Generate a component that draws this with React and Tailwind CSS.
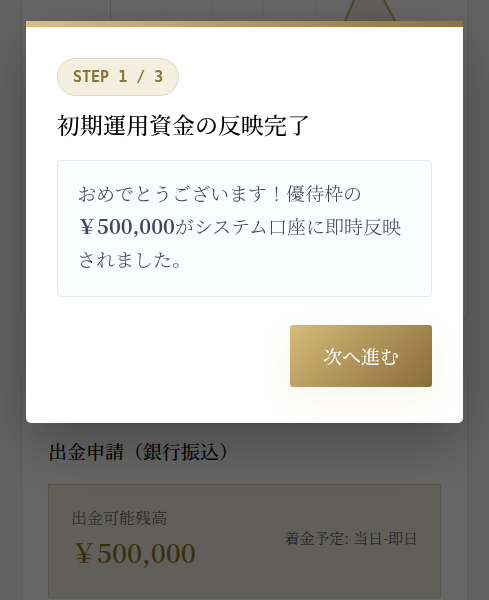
const serif =
  "font-['Noto_Serif_JP','Noto_Serif_CJK_JP','Liberation_Serif','Noto_Sans_CJK_JP',serif]";

function BalanceChart() {
  return (
    <svg className="block h-[300px] w-full" viewBox="0 0 391 300" preserveAspectRatio="none" aria-hidden="true">
      <g fill="none" strokeWidth="1">
        <path d="M61.5 0V300" stroke="#dadada" />
        <path d="M112.5 0V300M163.5 0V300M214.5 0V300M266.5 0V300M368.5 0V300" stroke="#f6f6f6" />
      </g>
      <path d="M286 48L296 21L305 0H335L346 21L360 48V300H286Z" fill="#f2ecdf" />
      <path d="M286 48L296 21L305 0M335 0L346 21L360 48" fill="none" stroke="#bdb06c" strokeWidth="2" />
    </svg>
  );
}

function Dashboard() {
  return (
    <main className="flex flex-col gap-[53px] px-[21px]" aria-hidden="true">
      <section className="h-[318px] rounded-b border border-t-0 border-[#e2e2e2] bg-white px-[27px]">
        <BalanceChart />
      </section>
      <section className="rounded border border-[#e2e2e2] bg-white px-[26px] pt-[65px] pb-8">
        <h2 className="text-[19px] leading-7 font-medium text-black">出金申請（銀行振込）</h2>
        <div className="mt-[19px] flex items-center justify-between border border-[#dcd6bc] bg-[#f0ede0] px-[22px] pt-[19px] pb-[25px]">
          <div>
            <p className="text-[16px] leading-7 font-light text-[#555]">出金可能残高</p>
            <p className="text-[26px] leading-10 font-semibold text-[#907428]">￥500,000</p>
          </div>
          <p className="text-[15px] leading-6 font-light text-[#444]">着金予定: 当日-即日</p>
        </div>
      </section>
    </main>
  );
}

function StepDialog() {
  return (
    <div className="fixed inset-0 flex items-start bg-black/60 px-[26px] pt-[21px]">
      <div
        role="dialog"
        aria-modal="true"
        aria-labelledby="step-title"
        className="w-full rounded-b-[5px] bg-white shadow-[0_20px_60px_rgba(0,0,0,0.3)]"
      >
        <div className="h-1.5 bg-linear-to-r from-[#d8bf7e] to-[#8e7338]" />
        <div className="flex flex-col items-start px-[31px] pt-[31px] pb-9">
          <span className="rounded-full border border-[#ddd9c6] bg-[#f5efdf] px-[15px] py-1.5 font-['DejaVu_Sans_Mono',monospace] text-[15px] leading-6 font-bold text-[#8a7438]">
            STEP 1 / 3
          </span>
          <h1 id="step-title" className="mt-3 text-[23px] leading-[34px] font-medium text-black">
            初期運用資金の反映完了
          </h1>
          <p className="mt-[18px] w-full rounded border border-[#e4e9ed] bg-[#fafcfe] px-[19px] pt-[15px] pb-[21px] text-[19px] leading-[33px] font-light text-[#41475a]">
            おめでとうございます！優待枠の
            <strong className="text-[20px] leading-8 font-bold">￥500,000</strong>がシステム口座に即時反映されました。
          </p>
          <button
            type="button"
            className="mt-7 self-end rounded-[3px] bg-linear-135 from-[#d6bc7a] to-[#8a6d38] px-[33px] py-[15px] text-[19px] leading-8 font-medium text-white shadow-[0_10px_30px_rgba(180,150,80,0.1)]"
          >
            次へ進む
          </button>
        </div>
      </div>
    </div>
  );
}

export default function App() {
  return (
    <div lang="ja" className={`h-screen overflow-hidden bg-[#f6f6f6] ${serif}`}>
      <Dashboard />
      <StepDialog />
    </div>
  );
}
